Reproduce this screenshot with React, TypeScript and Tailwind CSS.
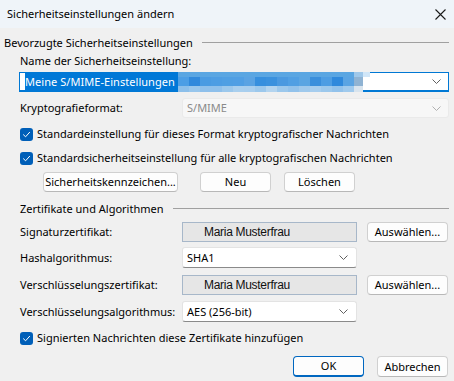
import { ReactNode } from "react";

function Check() {
  return (
    <span className="w-[13px] h-[13px] rounded-[3px] bg-[#005fb8] flex items-center justify-center shrink-0">
      <svg width="9" height="9" viewBox="0 0 9 9" fill="none">
        <path d="M1.5 4.8 L3.6 6.8 L7.6 2.3" stroke="white" strokeWidth="1" strokeLinecap="round" strokeLinejoin="round" />
      </svg>
    </span>
  );
}

function Chevron({ color = "#606060" }: { color?: string }) {
  return (
    <svg width="9" height="5" viewBox="0 0 9 5" fill="none">
      <path d="M0.5 0.5 L4.5 4.5 L8.5 0.5" stroke={color} strokeWidth="1" />
    </svg>
  );
}

function CheckRow({ children, className = "" }: { children: ReactNode; className?: string }) {
  return (
    <div className={`flex items-center gap-[4px] h-[16px] pl-[20px] ${className}`}>
      <Check />
      <span>{children}</span>
    </div>
  );
}

function Btn({ children, className = "" }: { children: ReactNode; className?: string }) {
  return (
    <div
      className={`h-[20px] bg-[#fdfdfd] border border-[#d0d0d0] border-b-[#b8b8b8] rounded-[4px] flex items-center justify-center ${className}`}
    >
      {children}
    </div>
  );
}

function Combo({ value, className = "" }: { value: string; className?: string }) {
  return (
    <div
      className={`w-[175px] h-[21px] bg-white border border-[#e3e3e3] border-b-[#8a8a8a] rounded-[3px] flex items-center justify-between pl-[4px] pr-[8px] ${className}`}
    >
      <span>{value}</span>
      <Chevron />
    </div>
  );
}

function CertField({ value }: { value: string }) {
  return (
    <div className="w-[175px] h-[20px] bg-[#e6e6e6] border border-[#a7b7c9] flex items-center pl-[21px] font-['Liberation_Sans',sans-serif] text-[12px] tracking-[-0.3px] text-[#101010]">
      {value}
    </div>
  );
}

// pixelated blur behind the selected name
const mosaicMid = [
  "#4c9ee5", "#3089dc", "#4a9be2", "#4d9de3", "#4f9fe3", "#509fe4", "#5aa3e3", "#368fde",
  "#3a91de", "#4a99e0", "#509fe3", "#5aa5e2", "#3a8fdc", "#4d9de3", "#2f89dc", "#5aa4e3",
];
const mosaicBot = [
  "#8cbfea", "#98c6ec", "#8fc0eb", "#8fc0eb", "#9cc8ec", "#a9cfee", "#a8ceee", "#9cc8ec",
  "#b3d4ef", "#9cc8ec", "#92c2eb", "#9fc9ec", "#a6cdee", "#9cc8ec", "#92c2eb", "#a0caed",
];

function Mosaic() {
  return (
    <svg width="192" height="20" viewBox="0 0 192 20" className="shrink-0">
      <rect x="0" y="0" width="176" height="5" fill="#5aa6e2" />
      <rect x="176" y="0" width="9" height="5" fill="#9fc8ea" />
      <rect x="185" y="0" width="7" height="5" fill="#d0e6f8" />
      {mosaicMid.map((c, i) => (
        <rect key={"m" + i} x={i * 11} y="5" width="11" height="9" fill={c} />
      ))}
      <rect x="176" y="5" width="9" height="9" fill="#8fb3d3" />
      {mosaicBot.map((c, i) => (
        <rect key={"b" + i} x={i * 11} y="14" width="11" height="6" fill={c} />
      ))}
      <rect x="176" y="14" width="9" height="6" fill="#d8e4ee" />
    </svg>
  );
}

export default function App() {
  return (
    <div className="w-[454px] h-[381px] overflow-hidden bg-[#f0f0f0] text-[11px] leading-[16px] text-black font-['Noto_Sans',sans-serif]">
      {/* title bar */}
      <div className="h-[28px] bg-[#eff4f9] flex items-center justify-between pl-[7px] pr-[8px]">
        <span>Sicherheitseinstellungen ändern</span>
        <svg width="11" height="11" viewBox="0 0 11 11">
          <path d="M0.5 0.5 L10.5 10.5 M10.5 0.5 L0.5 10.5" stroke="#1a1a1a" strokeWidth="1.1" />
        </svg>
      </div>

      {/* preferred settings */}
      <div className="mt-[7px] h-[16px] flex items-center pl-[4px] pr-[5px]">
        <span>Bevorzugte Sicherheitseinstellungen</span>
        <div className="flex-1 ml-[9px] -mt-[2px] border-t border-[#a0a0a0]" />
      </div>
      <div className="mt-[2px] h-[16px] pl-[20px]">Name der Sicherheitseinstellung:</div>
      <div className="mt-[3px] ml-[19px] w-[430px] h-[20px] bg-white border border-[#0078d4] border-b-2 flex items-center justify-between pr-[7px]">
        <div className="flex items-center h-full pl-[5px]">
          <span className="bg-[#0078d7] text-white h-[18px] pt-[1px] pr-[3px] tracking-[0.05px]">Meine S/MIME-Einstellungen</span>
          <Mosaic />
        </div>
        <Chevron />
      </div>
      <div className="mt-[6px] h-[20px] flex items-center pl-[20px]">
        <span className="w-[162px]">Kryptografieformat:</span>
        <div className="flex-1 mr-[5px] h-[20px] bg-[#f7f7f7] border border-[#eaeaea] rounded-[3px] flex items-center justify-between pl-[4px] pr-[7px] text-[#8a8a8a]">
          <span>S/MIME</span>
          <Chevron color="#b0b0b0" />
        </div>
      </div>
      <CheckRow className="mt-[8px]">Standardeinstellung für dieses Format kryptografischer Nachrichten</CheckRow>
      <CheckRow className="mt-[8px]">Standardsicherheitseinstellung für alle kryptografischen Nachrichten</CheckRow>
      <div className="mt-[6px] flex pl-[43px]">
        <Btn className="w-[135px]">Sicherheitskennzeichen...</Btn>
        <Btn className="w-[71px] ml-[22px]">Neu</Btn>
        <Btn className="w-[71px] ml-[13px]">Löschen</Btn>
      </div>

      {/* certificates */}
      <div className="mt-[9px] h-[16px] flex items-center pl-[20px] pr-[5px]">
        <span>Zertifikate und Algorithmen</span>
        <div className="flex-1 ml-[9px] -mt-[2px] border-t border-[#a0a0a0]" />
      </div>
      <div className="mt-[5px] h-[20px] flex items-center pl-[20px]">
        <span className="w-[162px]">Signaturzertifikat:</span>
        <CertField value="Maria Musterfrau" />
        <Btn className="w-[81px] ml-[10px]">Auswählen...</Btn>
      </div>
      <div className="mt-[5px] h-[21px] flex items-center pl-[20px]">
        <span className="w-[162px]">Hashalgorithmus:</span>
        <Combo value="SHA1" />
      </div>
      <div className="mt-[7px] h-[20px] flex items-center pl-[20px]">
        <span className="w-[162px]">Verschlüsselungszertifikat:</span>
        <CertField value="Maria Musterfrau" />
        <Btn className="w-[81px] ml-[10px]">Auswählen...</Btn>
      </div>
      <div className="mt-[6px] h-[21px] flex items-center pl-[20px]">
        <span className="w-[162px]">Verschlüsselungsalgorithmus:</span>
        <Combo value="AES (256-bit)" />
      </div>
      <CheckRow className="mt-[8px]">Signierten Nachrichten diese Zertifikate hinzufügen</CheckRow>
      <div className="mt-[10px] flex justify-end pr-[6px] gap-[13px]">
        <div className="w-[71px] h-[21px] bg-[#fdfdfd] border border-[#0067c0] border-b-2 rounded-[4px] flex items-center justify-center">
          OK
        </div>
        <Btn className="w-[71px] h-[21px]">Abbrechen</Btn>
      </div>
    </div>
  );
}
